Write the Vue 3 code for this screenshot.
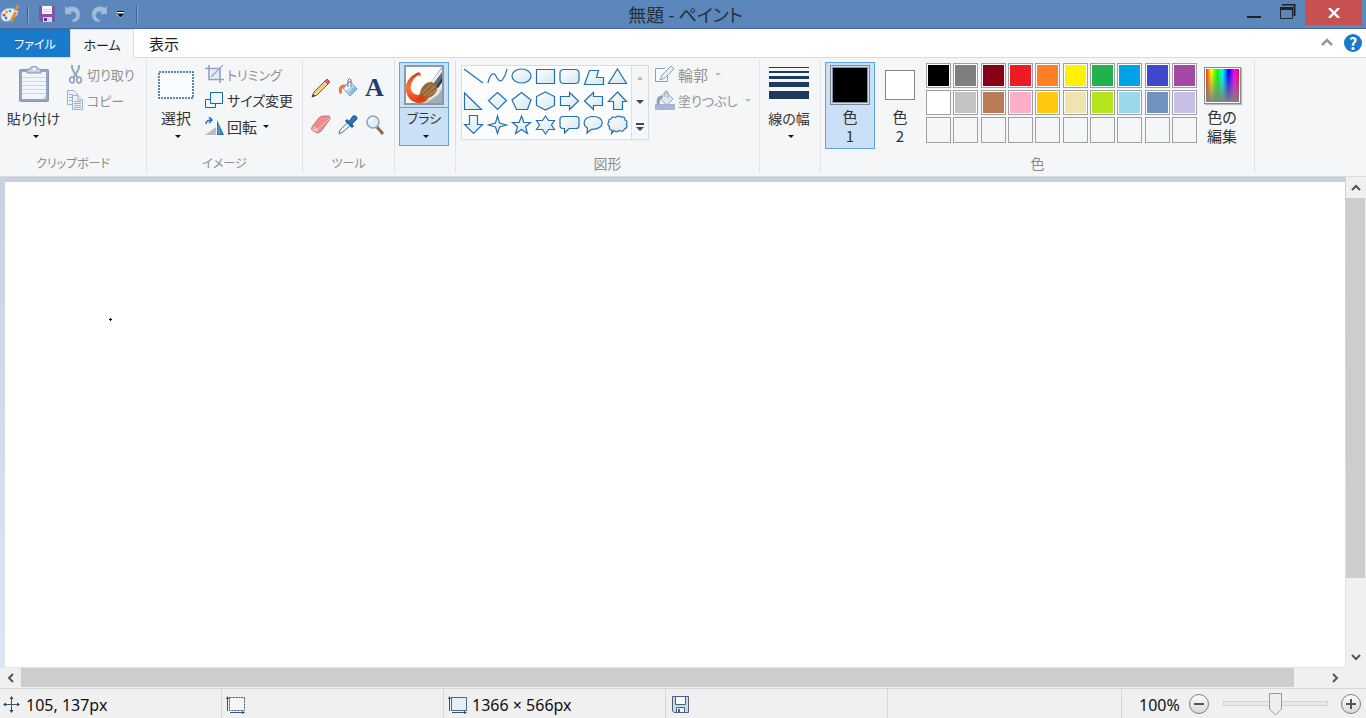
<script setup>
import { ref } from 'vue'

const zoom = ref(50)

const shapes = [
  { name: '直線', d: 'M2 3 L21 17' },
  { name: '曲線', d: 'M2 17 C4 7 8 6 10 10 C13 16 15 16 17 13 C20 9 20 6 21 3', open: true },
  { name: '楕円', d: 'M2 10 A9.5 7 0 0 1 21 10 A9.5 7 0 0 1 2 10 Z' },
  { name: '四角形', d: 'M2.5 3.5 H20.5 V17.5 H2.5 Z' },
  { name: '角丸四角形', d: 'M6 3.5 H17 Q21 3.5 21 7 V14 Q21 17.5 17 17.5 H6 Q2 17.5 2 14 V7 Q2 3.5 6 3.5 Z' },
  { name: '多角形', d: 'M7.5 4.5 H16.5 L14.5 11.5 H21.5 V18.5 H2.5 Z' },
  { name: '三角形', d: 'M11.5 3 L20.5 17.5 H2.5 Z' },
  { name: '直角三角形', d: 'M2.5 3 V19.5 H19.5 Z' },
  { name: 'ひし形', d: 'M11.5 2.5 L20.5 10.5 L11.5 19.5 L2.5 10.5 Z' },
  { name: '五角形', d: 'M11.5 2.5 L21 10 L17.5 19.5 H6.5 L2 10 Z' },
  { name: '六角形', d: 'M11.5 2 L20.5 6.5 V15.5 L11.5 20 L2.5 15.5 V6.5 Z' },
  { name: '右矢印', d: 'M2.5 6.5 H11.5 V2.5 L20.5 11 L11.5 19.5 V15.5 H2.5 Z' },
  { name: '左矢印', d: 'M20.5 6.5 H11.5 V2.5 L2.5 11 L11.5 19.5 V15.5 H20.5 Z' },
  { name: '上矢印', d: 'M11.5 2 L20.5 11.5 H16.5 V19.5 H7.5 V11.5 H2.5 Z' },
  { name: '下矢印', d: 'M7.5 1.5 H15.5 V10.5 H20.5 L11.5 19.5 L2.5 10.5 H7.5 Z' },
  { name: '四つ星', d: 'M11.5 2 L13.5 9 L20.5 11 L13.5 13 L11.5 19.5 L9.5 13 L2.5 11 L9.5 9 Z' },
  { name: '五つ星', d: 'M11.5 2 L13.8 8.5 H20.5 L15.5 12.8 L17.5 19.5 L11.5 15.5 L5.5 19.5 L7.5 12.8 L2.5 8.5 H9.2 Z' },
  { name: '六つ星', d: 'M11.5 2 L14.5 6.5 H20.5 L17.5 11 L20.5 15.5 H14.5 L11.5 20 L8.5 15.5 H2.5 L5.5 11 L2.5 6.5 H8.5 Z' },
  { name: '角丸吹き出し', d: 'M5 2.5 H18 Q21 2.5 21 5 V12 Q21 14.5 18 14.5 H11 L6.5 19 V14.5 H5 Q2 14.5 2 12 V5 Q2 2.5 5 2.5 Z' },
  { name: '楕円吹き出し', d: 'M9.5 15.3 L5 19 L5.5 14 C0 11 1 2.5 11.5 2.5 C23 2.5 24 15.5 9.5 15.3 Z' },
  { name: '雲形吹き出し', d: 'M5 5 Q6 2 9.5 3.5 Q12 1 15 3 Q19 2 19 6 Q22 7 20.5 10 Q22 14 18.5 15 Q17 18.5 13.5 16.5 Q10 19 8 16.5 L5.5 19.5 L6 16 Q2.5 16 3.5 12.5 Q0.5 10 3 8 Q2 5 5 5 Z' }
]

const palette = [
  { name: '黒', c: '#000000' }, { name: '灰色', c: '#7f7f7f' }, { name: '暗赤色', c: '#880015' },
  { name: '赤', c: '#ed1c24' }, { name: 'オレンジ', c: '#ff7f27' }, { name: '黄', c: '#fff200' },
  { name: '緑', c: '#22b14c' }, { name: '青緑', c: '#00a2e8' }, { name: '藍', c: '#3f48cc' },
  { name: '紫', c: '#a349a4' }, { name: '白', c: '#ffffff' }, { name: '薄い灰色', c: '#c3c3c3' },
  { name: '茶', c: '#b97a57' }, { name: 'ローズ', c: '#ffaec9' }, { name: '金', c: '#ffc90e' },
  { name: '薄い黄', c: '#efe4b0' }, { name: 'ライム', c: '#b5e61d' }, { name: '薄い青緑', c: '#99d9ea' },
  { name: '青灰色', c: '#7092be' }, { name: 'ラベンダー', c: '#c8bfe7' },
  ...Array.from({ length: 10 }, (_, i) => ({ name: 'ユーザー設定 ' + (i + 1), c: '' }))
]
</script>

<template>
  <div class="window">
    <header class="titlebar">
      <div class="quick">
        <svg class="appicon" width="20" height="20" viewBox="0 0 20 20">
          <path d="M1 12 C1 5 10 2 16 6 C19 9 17 13 13 13 C11 13 12 17 8 17 C4 18 1 16 1 12Z" fill="#e4eef6" stroke="#9fb9d0" />
          <circle cx="4" cy="11" r="1.6" fill="#d44" /><circle cx="6.500" cy="8" r="1.500" fill="#ef9a20" />
          <circle cx="10" cy="7" r="1.300" fill="#4aa84a" /><circle cx="6" cy="14" r="1.400" fill="#3d7fd0" />
          <path d="M11 18 L16 7" stroke="#e58b25" stroke-width="3" /><path d="M15 9 L18 1" stroke="#c98f4b" stroke-width="3" />
          <path d="M14 7 L18 8" stroke="#e9e4d4" stroke-width="1.500" />
        </svg>
        <span class="sep"></span>
        <button class="qbtn" aria-label="上書き保存">
          <svg width="16" height="16" viewBox="0 0 16 16">
            <path d="M0 0 H16 V16 H2 L0 14Z" fill="#8151ab" /><path d="M3 0 H13 V8 H3Z" fill="#f7f5fb" />
            <path d="M4 3.500 H12 M4 5.500 H12" stroke="#d5cce3" /><path d="M4 11 H13 V16 H4Z" fill="#d9cfe6" /><path d="M5 12 H8 V15 H5Z" fill="#60368a" />
          </svg>
        </button>
        <button class="qbtn" aria-label="元に戻す">
          <svg width="16" height="18" viewBox="0 0 16 18"><path d="M0 1 L2 3 C7 0 15 2 15 9 C15 14 12 17 8 17 L7 15 C10 14 12 12 11 9 C10 6 7 6 5 7 L7 9 H0Z" fill="#a3bad8" stroke="#8ea9cd" stroke-width="0.500" /></svg>
        </button>
        <button class="qbtn" aria-label="やり直し">
          <svg width="16" height="18" viewBox="0 0 16 18"><path d="M16 1 L14 3 C9 0 1 2 1 9 C1 14 4 17 8 17 L9 15 C6 14 4 12 5 9 C6 6 9 6 11 7 L9 9 H16Z" fill="#a3bad8" stroke="#8ea9cd" stroke-width="0.500" /></svg>
        </button>
        <button class="qmore" aria-label="クイック アクセス ツール バーのカスタマイズ">
          <svg width="9" height="8" viewBox="0 0 9 8"><path d="M1 0 H8 V2 H1Z M0 3 H8 L4.500 7Z" fill="#fff" /><path d="M1 0 H8 V1 H1Z M1 3 H8 L4.500 6.500Z" fill="#111" /></svg>
        </button>
        <span class="sep"></span>
      </div>
      <h1 class="title">無題 - ペイント</h1>
      <div class="winbtns">
        <button class="min" aria-label="最小化"><svg width="14" height="20"><path d="M0 15 H14 V17 H0Z" fill="#222" /></svg></button>
        <button class="max" aria-label="元に戻す (縮小)">
          <svg width="16" height="16"><path d="M2 0.500 H14.500 V12" fill="none" stroke="#222" stroke-width="2" /><path d="M0.500 3.500 H12.500 V14.500 H0.500Z" fill="none" stroke="#222" /><path d="M0 3 H13 V6 H0Z" fill="#222" /></svg>
        </button>
        <button class="close" aria-label="閉じる"><svg width="12" height="10"><path d="M1 0 L11 10 M11 0 L1 10" stroke="#fff" stroke-width="2.400" /></svg></button>
      </div>
    </header>

    <nav class="tabs">
      <button class="tab file">ファイル</button>
      <button class="tab active">ホーム</button>
      <button class="tab">表示</button>
      <span class="grow"></span>
      <button class="collapse" aria-label="リボンの最小化"><svg width="12" height="10"><path d="M1 7 L6 2 L11 7" fill="none" stroke="#999" stroke-width="2.500" /></svg></button>
      <button class="help" aria-label="ヘルプ">?</button>
    </nav>

    <main class="ribbon">
      <section class="group g-clip">
        <div class="body">
          <button class="big paste">
            <span class="ico">
              <svg width="32" height="38" viewBox="0 0 32 38">
                <rect x="1.500" y="3.500" width="29" height="32" rx="1" fill="#94a5c2" stroke="#8497b9" />
                <path d="M4 6 H28 V33 H4Z" fill="#f2f6fc" />
                <path d="M4 11.500 H28 M4 15.500 H28 M4 19.500 H28 M4 23.500 H28 M4 27.500 H28" stroke="#c9d7e8" />
                <path d="M9 7 V4 Q9 3 11 3 H12 Q12 0.500 16 0.500 Q20 0.500 20 3 H21 Q23 3 23 4 V7Z" fill="#c3cede" stroke="#8497b9" />
                <circle cx="16" cy="3" r="1.500" fill="#fff" />
                <path d="M24 33 L28 29 V33Z" fill="#ccd8e8" />
              </svg>
            </span>
            <span class="cap">貼り付け</span><i class="arrow"></i>
          </button>
          <div class="smalls">
            <button class="small off" disabled>
              <svg width="17" height="20" viewBox="0 0 17 20"><path d="M5 1 C4 5 8 10 11 14 M12 1 C13 5 9 10 6 14" fill="none" stroke="#98a9c4" stroke-width="2.200" /><ellipse cx="5" cy="16" rx="2.300" ry="2.800" fill="none" stroke="#91a5c4" stroke-width="1.700" /><ellipse cx="12" cy="16" rx="2.300" ry="2.800" fill="none" stroke="#91a5c4" stroke-width="1.700" /></svg>
              切り取り
            </button>
            <button class="small off" disabled>
              <svg width="17" height="20" viewBox="0 0 17 20"><g fill="#edf2f9" stroke="#9bb0cf"><path d="M0.500 0.500 H7 L10.500 4 V14.500 H0.500Z" /><path d="M2 4.500 H6 M2 7.500 H6 M2 10.500 H6" /><path d="M5.500 5.500 H11 L15.500 10 V19.500 H5.500Z" /><path d="M7 11.500 H14 M7 13.500 H14 M7 15.500 H14 M7 17.500 H14 M11 5.500 V10 H15" /></g></svg>
              コピー
            </button>
          </div>
        </div>
        <h2 class="label">クリップボード</h2>
      </section>

      <section class="group g-image">
        <div class="body">
          <button class="big select">
            <span class="ico"><svg width="36" height="28"><rect x="1" y="1" width="34" height="26" fill="#fbfcfe" stroke="#1d66a5" stroke-width="1.500" stroke-dasharray="2 1" /></svg></span>
            <span class="cap">選択</span><i class="arrow"></i>
          </button>
          <div class="smalls">
            <button class="small off" disabled>
              <svg width="19" height="18" viewBox="0 0 19 18"><path d="M6 5 H14 V13 H6Z" fill="#e2eaf5" /><path d="M0 3.500 H15 V18 M4 0 V14.500 H19" fill="none" stroke="#8fa1c1" stroke-width="1.600" /><path d="M6 12 L18 0" stroke="#93a5c4" stroke-width="1.200" /></svg>
              トリミング
            </button>
            <button class="small full">
              <svg width="19" height="18" viewBox="0 0 19 18"><g fill="#eef7fd" stroke="#1867a8"><path d="M0.500 8.500 H10.500 V16.500 H0.500Z" /><path d="M5.500 1.500 H17.500 V12.500 H5.500Z" /></g></svg>
              サイズ変更
            </button>
            <button class="small kanji">
              <svg width="19" height="19" viewBox="0 0 19 19"><path d="M0 18 L11 10 V18Z" fill="#b9bdc0" /><path d="M12 3 L19 18 H12Z" fill="#1f78b8" /><path d="M13 6 L16 17 H13Z" fill="#54a0d2" /><path d="M1 7 Q1 3 6 3 M4 0 L7 3 L4 6" fill="none" stroke="#1c72cd" stroke-width="1.600" /></svg>
              回転 <i class="arrow side"></i>
            </button>
          </div>
        </div>
        <h2 class="label">イメージ</h2>
      </section>

      <section class="group g-tools">
        <div class="body tools">
          <button aria-label="鉛筆"><svg width="20" height="20" viewBox="0 0 20 20"><path d="M1 19 L3 14 L14 3 L17 6 L6 17Z" fill="#f9d98d" stroke="#6b5a3a" /><path d="M4 15 L15 5" stroke="#e8b747" /><path d="M14 3 L16 1 L19 4 L17 6Z" fill="#df6678" stroke="#a8445a" /><path d="M1 19 L2 16 L4 18Z" fill="#333" /></svg></button>
          <button aria-label="塗りつぶし"><svg width="20" height="20" viewBox="0 0 20 20"><path d="M5 10 L12 3 L19 11 L12 18Z" fill="#b6d8ee" stroke="#7193b4" /><path d="M6 10 L12 4 L15 7 L8 13Z" fill="#eaf5fb" /><path d="M13 16 L18 11 L16 9 L11 15Z" fill="#83b9df" /><path d="M9 7 C3 5 0 9 1 14 C2 17 4 17 4 13 C4 10 5 9 6 10Z" fill="#e77c4f" /><path d="M10 9 V2 Q11.500 -1 13 2 V9" fill="none" stroke="#777" /></svg></button>
          <button class="text-tool" aria-label="テキスト">A</button>
          <button aria-label="消しゴム"><svg width="20" height="20" viewBox="0 0 20 20"><path d="M7 4 Q9 1 12 1 H18 Q20 2 19 4 L11 15 Q9 18 6 18 L1 15 Q0 14 1 12Z" fill="#ee8b8b" stroke="#c77878" /><path d="M2 13 L7 15 L6 17 L1 15Z" fill="#f8c3bf" /><path d="M2 12 L7 14 L19 3" fill="none" stroke="#fbcaca" /></svg></button>
          <button aria-label="色の選択"><svg width="20" height="20" viewBox="0 0 20 20"><path d="M10 7 L2 15 L1 19 L5 17 L13 10" fill="#e2eff6" stroke="#5c7890" /><path d="M8 5 L15 12" stroke="#1d5fa2" stroke-width="3" /><path d="M10 8 L15 1 Q19 0 19 4 L13 10Z" fill="#2b77be" stroke="#185998" /></svg></button>
          <button aria-label="拡大鏡"><svg width="20" height="20" viewBox="0 0 20 20"><path d="M12 12 L18 19" stroke="#8c6b4b" stroke-width="3" /><circle cx="8" cy="7" r="6" fill="#dfedf8" stroke="#93a2b1" stroke-width="1.500" /><path d="M5 7 Q5 4 9 3" fill="none" stroke="#fff" stroke-width="2" /></svg></button>
        </div>
        <h2 class="label">ツール</h2>
      </section>

      <section class="group g-brush">
        <div class="body">
          <button class="brush">
            <span class="brush-ico">
              <svg width="40" height="40" viewBox="0 0 40 40">
                <defs>
                  <linearGradient id="paint" x1="0" y1="0" x2="0" y2="1"><stop offset="0" stop-color="#c9441d" /><stop offset="0.500" stop-color="#fb7440" /><stop offset="1" stop-color="#e03c10" /></linearGradient>
                  <linearGradient id="back" x1="0" y1="0" x2="1" y2="1"><stop offset="0.500" stop-color="#fcfcfa" /><stop offset="1" stop-color="#c3d3d6" /></linearGradient>
                </defs>
                <rect x="1" y="1" width="38" height="38" fill="url(#back)" stroke="#8c9aa4" stroke-width="2" />
                <path d="M22 38 H38 V24 L34 30Z" fill="#9fb0b3" />
                <path d="M16 12 C18 8 15 6 11 9 C4 13 1 19 2 26 C3 33 9 38 15 38 C21 38 24 35 25 32 L17 28 L14 30 C8 29 6 25 7 20 C8 15 12 11 15 10Z" fill="url(#paint)" />
                <path d="M27 17 L38 2 V17 L33 23Z" fill="#5f6f80" /><path d="M27 17 L38 3 V7 L29 19Z" fill="#eef2f5" /><path d="M32 22 L38 13 V17 L34 23Z" fill="#2b3847" />
                <path d="M16 30 C16 23 21 17 27 17 C32 18 35 23 32 27 C29 32 24 34 19 33Z" fill="#96693a" />
                <path d="M18 28 L27 19 M20 31 L31 21 M24 31 L32 25" stroke="#bf9360" stroke-width="1" />
                <path d="M11 34 C14 33 16 30 17 29 L21 33 C19 36 15 37 11 34Z" fill="#d83e15" />
              </svg>
            </span>
            <span class="cap">ブラシ</span><i class="arrow"></i>
          </button>
        </div>
      </section>

      <section class="group g-shapes">
        <div class="body">
          <div class="gallery">
            <div class="shapes">
              <button v-for="s in shapes" :key="s.name" :aria-label="s.name">
                <svg width="23" height="22" viewBox="0 0 23 22">
                  <defs><linearGradient id="shapefill" x1="0" y1="0" x2="1" y2="1"><stop offset="0" stop-color="#fff" /><stop offset="1" stop-color="#cfe8ef" /></linearGradient></defs>
                  <path :d="s.d" :fill="s.open ? 'none' : 'url(#shapefill)'" stroke="#276eac" stroke-width="1.200" />
                </svg>
              </button>
            </div>
            <div class="gscroll">
              <button aria-label="上へ" disabled><i class="arrow up"></i></button>
              <button aria-label="下へ"><i class="arrow navy"></i></button>
              <button aria-label="その他の図形"><i class="bar"></i><i class="arrow navy"></i></button>
            </div>
          </div>
          <div class="smalls">
            <button class="small off kanji" disabled>
              <svg width="20" height="18" viewBox="0 0 20 18"><path d="M1 3.500 H15 V16.500 H1Z" fill="#f7f9fc" /><path d="M10 3.500 H0.500 V16.500 H12.500 V11" fill="none" stroke="#8c9fbd" /><path d="M5 15 L7 10 L16 1 L19 4 L10 13Z" fill="#e6edf7" stroke="#8fa2c0" /></svg>
              輪郭 <i class="arrow gray"></i>
            </button>
            <button class="small off" disabled>
              <svg width="20" height="20" viewBox="0 0 20 20"><path d="M0 14 H20 V20 H0Z" fill="#a7b6d2" /><path d="M5 7 L11 2 L18 9 L12 15 L6 10Z" fill="#dfe7f2" stroke="#95a7c4" /><path d="M8 6 C2 5 1 10 2 15 H5 C4 10 6 8 8 8Z" fill="#8d9fbf" /><path d="M10 7 V2 Q11 -1 13 2 V8" fill="none" stroke="#95a7c4" /></svg>
              塗りつぶし <i class="arrow gray"></i>
            </button>
          </div>
        </div>
        <h2 class="label">図形</h2>
      </section>

      <section class="group g-width">
        <div class="body">
          <button class="big width">
            <span class="ico"><svg width="40" height="32"><path d="M0 0 H40 V1 H0Z M0 4 H40 V6 H0Z M0 9 H40 V12 H0Z M0 15 H40 V20 H0Z M0 24 H40 V32 H0Z" fill="#1f3a5f" /></svg></span>
            <span class="cap">線の幅</span><i class="arrow"></i>
          </button>
        </div>
      </section>

      <section class="group g-colors">
        <div class="body">
          <button class="pick on"><span class="well"><i class="chip black"></i></span><span class="two">色<br />1</span></button>
          <button class="pick"><span class="well"><i class="chip white"></i></span><span class="two">色<br />2</span></button>
          <div class="palette">
            <button v-for="p in palette" :key="p.name" class="cell" :class="{ empty: !p.c }" :aria-label="p.name" :style="{ backgroundColor: p.c || null }"></button>
          </div>
          <button class="edit"><span class="well"><i class="spectrum"></i></span><span class="two">色の<br />編集</span></button>
        </div>
        <h2 class="label">色</h2>
      </section>
    </main>

    <div class="work">
      <div class="desk">
        <div class="paper">
          <svg class="dot" width="3" height="3"><path d="M1 0 H2 V1 H3 V2 H2 V3 H1 V2 H0 V1 H1Z" fill="#000" /></svg>
        </div>
      </div>
      <div class="vscroll">
        <button aria-label="上へスクロール"><svg width="10" height="7"><path d="M1 6 L5 2 L9 6" /></svg></button>
        <div class="vthumb"></div><div class="vrest"></div>
        <button aria-label="下へスクロール"><svg width="10" height="7"><path d="M1 1 L5 5 L9 1" /></svg></button>
      </div>
      <div class="hscroll">
        <button aria-label="左へスクロール"><svg width="7" height="10"><path d="M6 1 L2 5 L6 9" /></svg></button>
        <div class="hthumb"></div><div class="hrest"></div>
        <button aria-label="右へスクロール"><svg width="7" height="10"><path d="M1 1 L5 5 L1 9" /></svg></button>
      </div>
      <div class="corner"></div>
    </div>

    <footer class="status">
      <div class="cellbox first">
        <svg width="17" height="17" viewBox="0 0 17 17"><path d="M8.500 1 V16 M1 8.500 H16" stroke="#3c5370" /><path d="M8.500 0 L10.500 3 H6.500Z M8.500 17 L6.500 14 H10.500Z M0 8.500 L3 6.500 V10.500Z M17 8.500 L14 10.500 V6.500Z" fill="#2d4564" /></svg>
        105, 137px
      </div>
      <div class="cellbox">
        <svg width="20" height="18" viewBox="0 0 20 18"><rect x="3.500" y="1.500" width="15" height="13" fill="#f4f6f8" stroke="#3c5370" stroke-dasharray="2 1" /><path d="M1.500 1 V15 M4 16.500 H18" stroke="#3c5370" /><path d="M1.500 0 L3 3 H0Z M19 16.500 L16 15 V18Z" fill="#2d4564" /></svg>
      </div>
      <div class="cellbox">
        <svg width="20" height="18" viewBox="0 0 20 18"><rect x="3.500" y="1.500" width="15" height="13" fill="#e3f1f5" stroke="#4f6a8a" /><path d="M1.500 1 V15 M4 16.500 H18" stroke="#3c5370" /><path d="M1.500 0 L3 3 H0Z M19 16.500 L16 15 V18Z" fill="#2d4564" /></svg>
        1366 × 566px
      </div>
      <div class="cellbox disk">
        <svg width="18" height="18" viewBox="0 0 18 18"><path d="M0.500 0.500 H16.500 V16.500 H2 L0.500 15Z" fill="#c9dbe5" stroke="#48607c" /><path d="M3.500 0.500 H13.500 V8.500 H3.500Z" fill="#fafcfd" stroke="#48607c" /><path d="M4.500 11.500 H12.500 V16.500 H4.500Z" fill="#f1f4f5" stroke="#48607c" /><path d="M6 13 H8 V16 H6Z" fill="#48607c" /></svg>
      </div>
      <div class="cellbox wide"></div>
      <div class="zoombox">
        <label for="zoom">100%</label>
        <button class="round" aria-label="縮小"><svg width="10" height="10"><path d="M0 4 H10 V6 H0Z" fill="#555" /></svg></button>
        <div class="slider">
          <input id="zoom" v-model="zoom" type="range" min="0" max="100" />
          <svg class="knob" width="13" height="23" viewBox="0 0 13 23" :style="{ left: zoom + '%' }"><path d="M0.500 0.500 H12.500 V16 L6.500 22 L0.500 16Z" fill="#eeeeee" stroke="#999" /></svg>
        </div>
        <button class="round" aria-label="拡大"><svg width="10" height="10"><path d="M0 4 H4 V0 H6 V4 H10 V6 H6 V10 H4 V6 H0Z" fill="#555" /></svg></button>
      </div>
    </footer>
  </div>
</template>

<style>
body { margin: 0; }
</style>

<style scoped>
.window { height: 100vh; display: flex; flex-direction: column; overflow: hidden; font-family: "Noto Sans", "Noto Sans CJK JP", sans-serif; font-size: 14px; color: #333; background: #f0f0f0; }
.window * { box-sizing: border-box; }
button { font: inherit; font-feature-settings: "palt"; color: inherit; background: none; border: 0; padding: 0; margin: 0; border-radius: 0; display: flex; align-items: center; justify-content: center; white-space: nowrap; }
svg { display: block; flex: none; }
h1, h2 { margin: 0; font-weight: 400; font-feature-settings: "palt"; font-family: "Noto Sans CJK JP", sans-serif; }

.titlebar { height: 29px; flex: none; display: grid; grid-template-columns: 1fr auto 1fr; background: #5b87bc; border-bottom: 1px solid #46699a; }
.quick { display: flex; align-items: center; }
.appicon { margin-right: 7px; }
.sep { width: 2px; height: 17px; background: #3d5f88; border-right: 1px solid #88a8d0; }
.qbtn { width: 26px; height: 26px; }
.sep + .qbtn { margin-left: 5px; }
.qmore { width: 17px; height: 26px; margin: 2px 7px 0 0; }
.title { font-size: 18px; line-height: 28px; color: #262f3a; padding-left: 5px; }
.winbtns { display: flex; justify-content: flex-end; align-items: flex-start; padding-right: 4px; }
.min { width: 34px; height: 22px; }
.max { width: 34px; height: 24px; }
.close { width: 57px; height: 25px; background: #c75050; }

.tabs { height: 29px; flex: none; display: flex; background: #fff; border-bottom: 1px solid #dadbdc; color: #222; font-family: "Noto Sans CJK JP", sans-serif; }
.tab { height: 29px; width: 60px; font-size: 15px; }
.file { width: 70px; height: 28px; background: #1979ca; color: #fff; font-size: 12px; }
.active { width: 64px; background: #f5f6f7; border: 1px solid #dadbdc; border-bottom: 0; font-size: 13px; }
.grow { flex: 1; }
.collapse { width: 20px; margin-right: 7px; }
.help { align-self: center; width: 18px; height: 18px; margin-right: 4px; border-radius: 50%; background: #1979ca; color: #fff; font-weight: 700; font-size: 16px; }

.ribbon { height: 119px; flex: none; display: flex; padding: 2px 0 3px; background: #f5f6f7; border-bottom: 1px solid #dadbdc; font-family: "Noto Sans CJK JP", sans-serif; }
.group { flex: none; display: flex; flex-direction: column; justify-content: space-between; border-right: 1px solid #e2e3e4; }
.g-clip { width: 147px; }
.g-image { width: 156px; }
.g-tools { width: 92px; }
.g-brush { width: 61px; }
.g-shapes { width: 304px; }
.g-width { width: 61px; }
.g-colors { width: 434px; }
.body { display: flex; align-items: flex-start; padding-top: 2px; }
.label { font-size: 14px; line-height: 20px; color: #8c8c8c; text-align: center; }
.g-clip .label, .g-image .label, .g-tools .label { font-size: 12px; }
.big { flex-direction: column; justify-content: flex-start; height: 84px; font-size: 15px; }
.ico { height: 46px; display: flex; align-items: center; }
.cap { line-height: 20px; }
.arrow { width: 0; height: 0; flex: none; border: 3px solid transparent; border-top-color: #111; border-bottom: 0; }
.big .arrow, .brush .arrow { margin: 7px 0 0 4px; }
.paste { width: 67px; font-size: 14px; }
.select { width: 58px; }
.width { width: 58px; font-size: 14px; }
.width .ico { padding-bottom: 4px; }
.smalls { display: flex; flex-direction: column; margin-top: -1px; }
.small { height: 26px; justify-content: flex-start; gap: 3px; font-size: 13px; }
.full { font-size: 14px; }
.kanji { font-size: 15px; }
.off { color: #929292; }
.side { margin-left: 3px; }
.gray { border-top-color: #b8b8b8; margin-left: 4px; }

.tools { display: grid; grid-template-columns: repeat(3, 27px); grid-auto-rows: 37px; align-items: center; padding: 9px 0 0 4px; }
.text-tool { font-family: "Liberation Serif", serif; font-weight: 700; font-size: 26px; line-height: 30px; color: #1f3e6b; }
.brush { width: 50px; height: 84px; margin-left: 4px; flex-direction: column; justify-content: flex-start; background: #c9e0f7; border: 1px solid #62a2e4; }
.brush-ico { width: 48px; height: 45px; display: flex; align-items: center; justify-content: center; border-bottom: 1px solid #62a2e4; }
.brush .cap { font-size: 13px; }

.gallery { display: flex; height: 75px; margin: 3px 6px 0 5px; background: #fbfcfe; border: 1px solid #dadcdf; }
.shapes { width: 169px; display: grid; grid-template-columns: repeat(7, 24px); grid-auto-rows: 24px; }
.shapes button { align-items: flex-start; justify-content: flex-start; }
.gscroll { width: 17px; display: flex; flex-direction: column; background: #f5f6f7; border-left: 1px solid #dadcdf; }
.gscroll button { flex: 1; flex-direction: column; gap: 2px; }
.navy { border-top-color: #35486b; border-left-width: 4px; border-right-width: 4px; border-top-width: 4px; }
.up { border-top: 0; border-bottom: 4px solid #b8bcc5; }
.bar { width: 8px; height: 2px; background: #35486b; }

.pick { width: 50px; height: 87px; flex-direction: column; justify-content: flex-start; font-size: 15px; border: 1px solid transparent; }
.pick.on { background: #c9e0f7; border-color: #62a2e4; margin-left: 4px; }
.well { height: 44px; display: flex; align-items: center; justify-content: center; }
.two { line-height: 19px; text-align: center; }
.chip { border: 1px solid #868686; }
.black { width: 40px; height: 40px; background: #000; box-shadow: inset 0 0 0 1px #c9e0f7, inset 0 0 0 2px #7c93ab; }
.white { width: 30px; height: 30px; background: #fff; }
.palette { width: 271px; height: 80px; margin: 1px 0 0 1px; display: grid; grid-template-columns: repeat(10, 25px); grid-template-rows: 25px 25px 26px; justify-content: space-between; align-content: space-between; }
.cell { border: 1px solid #a0a0a0; box-shadow: inset 0 0 0 1px #fff; }
.empty { box-shadow: none; }
.edit { width: 50px; flex-direction: column; font-size: 15px; padding-top: 1px; }
.spectrum { width: 37px; height: 37px; border: 1px solid #888; box-shadow: inset 0 0 0 1px #fff, 1px 1px 1px #bbb; background: linear-gradient(to bottom, transparent 10%, #808080 100%), linear-gradient(to right, #f00, #ff0 18%, #0f0 35%, #0ff 50%, #00f 67%, #f0f 84%, #f00); }

.work { flex: 1; min-height: 0; display: grid; grid-template-columns: 1fr 20px; grid-template-rows: 1fr 20px; }
.desk { padding: 5px 1px 1px 5px; background: linear-gradient(#c8d1e2, #dce6f4); }
.paper { position: relative; height: 100%; background: #fff; }
.dot { position: absolute; left: 104px; top: 136px; }
.vscroll, .hscroll { display: flex; background: #f0f0f0; }
.vscroll { flex-direction: column; }
.vscroll button { height: 21px; margin-right: 1px; }
.hscroll button { width: 21px; margin-bottom: 1px; }
.vscroll path, .hscroll path { fill: none; stroke: #555; stroke-width: 2; }
.vthumb { flex: 379; margin-right: 1px; background: #cdcdcd; }
.vrest { flex: 69; }
.hthumb { flex: 1273; margin-bottom: 1px; background: #cdcdcd; }
.hrest { flex: 31; }
.corner { background: #f0f0f0; }

.status { height: 30px; flex: none; display: flex; align-items: stretch; background: #f0f0f0; border-top: 1px solid #d7d7d7; font-size: 16px; color: #111; }
.cellbox { width: 222px; display: flex; align-items: center; gap: 4px; padding: 2px 0 0 4px; border-right: 1px solid #d7d7d7; }
.first { padding-left: 3px; gap: 6px; }
.disk { padding-left: 6px; }
.wide { flex: 1; }
.zoombox { width: 244px; display: flex; align-items: center; padding-left: 17px; }
.zoombox label { width: 50px; padding-top: 2px; }
.round { width: 20px; height: 20px; border-radius: 50%; border: 1px solid #808080; background: linear-gradient(#fdfdfd, #d8d8d8); }
.slider { position: relative; width: 105px; height: 24px; margin: 0 13px 0 14px; display: flex; align-items: center; }
.slider input { appearance: none; width: 105px; height: 5px; margin: 0; background: #e7eaea; border: 1px solid #cfd5d5; }
.slider input::-webkit-slider-thumb { appearance: none; width: 13px; height: 23px; background: transparent; }
.knob { position: absolute; top: 1px; margin-left: -7px; pointer-events: none; }
</style>
